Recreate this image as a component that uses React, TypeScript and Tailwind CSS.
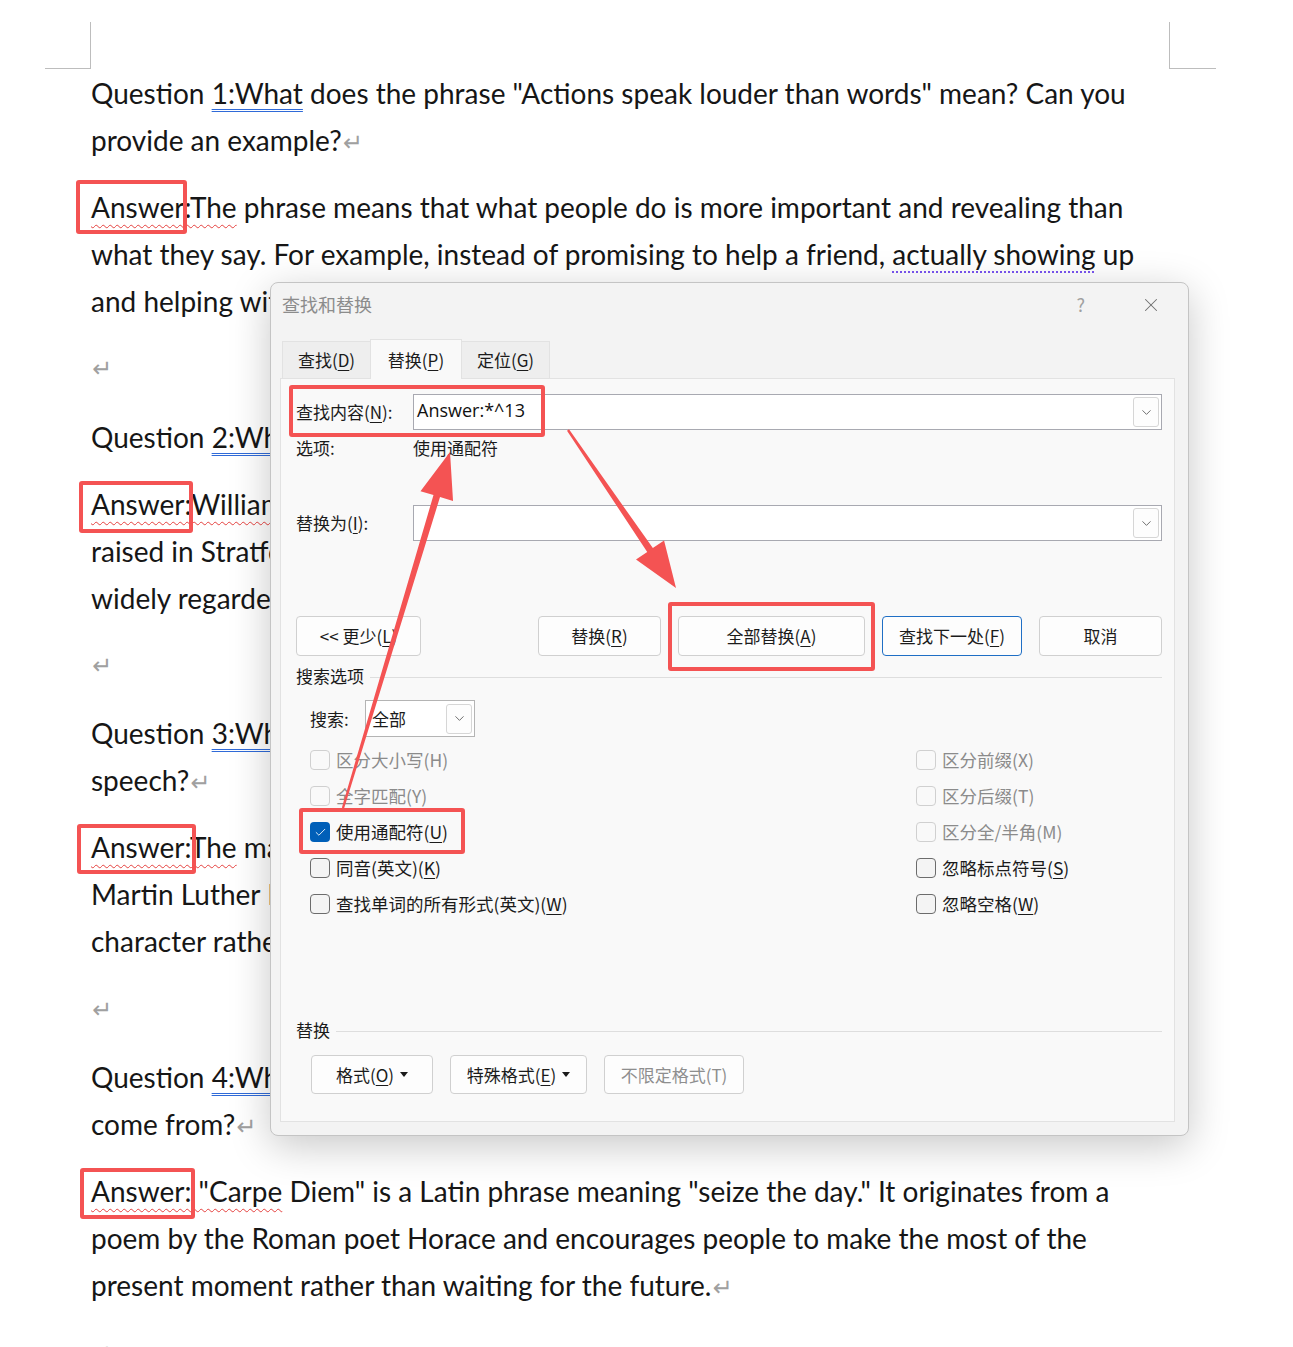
import React from 'react';
import { X, ChevronDown, Check } from 'lucide-react';

const RED = 'border-[#f45353]';

const Line = ({ children }: { children?: React.ReactNode }) => (
  <div className="h-[47px] leading-[47px] whitespace-nowrap">{children}</div>
);

const Ret = () => <span className="text-[#a0a0a0] text-[24px] font-['DejaVu_Sans',sans-serif] ml-[1px]">↵</span>;

const Dbl = ({ children }: { children: React.ReactNode }) => (
  <span className="underline decoration-double decoration-[#2f6ad8] decoration-1 underline-offset-[5px]">{children}</span>
);

const Wavy = ({ children }: { children: React.ReactNode }) => (
  <span className="underline decoration-wavy decoration-[#e5413f] decoration-1 underline-offset-[6px]">{children}</span>
);

const Dots = ({ children }: { children: React.ReactNode }) => (
  <span className="underline decoration-dotted decoration-[#7a55f0] decoration-2 underline-offset-[6px]">{children}</span>
);

const Mn = ({ children }: { children: React.ReactNode }) => (
  <span className="underline underline-offset-[3px] decoration-1">{children}</span>
);

const Caret = () => (
  <svg width="8" height="5" viewBox="0 0 8 5" className="ml-[6px]">
    <polygon points="0,0 8,0 4,5" fill="#1b1b1b" />
  </svg>
);

const DropBtn = () => (
  <div className="w-[26px] h-[30px] mr-[2px] border border-[#d6d6d6] rounded-[3px] bg-[#fdfdfd] flex items-center justify-center">
    <ChevronDown size={15} strokeWidth={1.4} color="#5a5a5a" />
  </div>
);

const Btn = ({ w, blue, disabled, children }: { w: string; blue?: boolean; disabled?: boolean; children: React.ReactNode }) => (
  <div
    className={`${w} h-full flex items-center justify-center rounded-[4px] bg-[#fdfdfd] border ${
      blue ? 'border-[#1f6fc5]' : 'border-[#d0d0d0]'
    } ${disabled ? 'text-[#8e8e8e]' : ''}`}
  >
    {children}
  </div>
);

const Box = ({ state, children }: { state: 'off' | 'on' | 'dis'; children: React.ReactNode }) => (
  <div className="h-[36px] flex items-center">
    {state === 'on' ? (
      <div className="w-[20px] h-[20px] rounded-[4px] bg-[#005fb8] flex items-center justify-center">
        <Check size={13} strokeWidth={1.6} color="#fff" />
      </div>
    ) : (
      <div
        className={`w-[20px] h-[20px] rounded-[4px] border ${
          state === 'dis' ? 'border-[#d0d0d0]' : 'border-[#6c6c6c] bg-[#f4f4f4]'
        }`}
      />
    )}
    <span className={`ml-[6px] ${state === 'dis' ? 'text-[#8b8b8b]' : ''}`}>{children}</span>
  </div>
);

function Arrow({ x1, y1, x2, y2 }: { x1: number; y1: number; x2: number; y2: number }) {
  const dx = x2 - x1;
  const dy = y2 - y1;
  const len = Math.hypot(dx, dy);
  const ux = dx / len;
  const uy = dy / len;
  const px = -uy;
  const py = ux;
  const head = 46;
  const hw = 17;
  const bx = x2 - ux * head;
  const by = y2 - uy * head;
  const pts = [
    [x1 + px * 1.2, y1 + py * 1.2],
    [bx + px * 3.4, by + py * 3.4],
    [bx + px * hw, by + py * hw],
    [x2, y2],
    [bx - px * hw, by - py * hw],
    [bx - px * 3.4, by - py * 3.4],
    [x1 - px * 1.2, y1 - py * 1.2],
  ]
    .map((p) => p.join(','))
    .join(' ');
  return <polygon points={pts} fill="#f45353" />;
}

export default function App() {
  return (
    <div className="relative w-[1293px] h-[1347px] overflow-hidden bg-white">
      {/* page corner marks */}
      <div className="flex justify-between h-[69px]">
        <div className="ml-[45px] mt-[22px] w-[46px] h-[47px] border-r border-b border-[#bdbdbd]" />
        <div className="mr-[77px] mt-[22px] w-[47px] h-[47px] border-l border-b border-[#bdbdbd]" />
      </div>

      {/* document body */}
      <div className="pl-[91px] mt-[1px] text-[28px] text-[#161616] font-[Lato,sans-serif]">
        <div>
          <Line>Question <Dbl>1:What</Dbl> does the phrase "Actions speak louder than words" mean? Can you</Line>
          <Line>provide an example?<Ret /></Line>
        </div>
        <div className="mt-[20px]">
          <Line><Wavy>Answer:The</Wavy> phrase means that what people do is more important and revealing than</Line>
          <Line>what they say. For example, instead of promising to help a friend, <Dots>actually showing</Dots> up</Line>
          <Line>and helping with the task demonstrates true commitment.<Ret /></Line>
        </div>
        <div className="mt-[18px]"><Line><Ret /></Line></div>
        <div className="mt-[24px]">
          <Line>Question <Dbl>2:Who</Dbl> wrote the famous play "Romeo and Juliet"?<Ret /></Line>
        </div>
        <div className="mt-[20px]">
          <Line><Wavy>Answer:William</Wavy> Shakespeare wrote "Romeo and Juliet." He was a playwright born and</Line>
          <Line>raised in Stratford-upon-Avon, and his works are among the most famous.</Line>
          <Line>widely regarded as the greatest writer in the English language.<Ret /></Line>
        </div>
        <div className="mt-[18px]"><Line><Ret /></Line></div>
        <div className="mt-[23px]">
          <Line>Question <Dbl>3:What</Dbl> is the main message of Martin Luther King Jr.'s "I Have a Dream"</Line>
          <Line>speech?<Ret /></Line>
        </div>
        <div className="mt-[20px]">
          <Line><Wavy>Answer:The</Wavy> main message is a call for an end to racism and for equality.</Line>
          <Line>Martin Luther King Jr. dreamed of a nation where people would be judged by</Line>
          <Line>character rather than the color of their skin.<Ret /></Line>
        </div>
        <div className="mt-[19px]"><Line><Ret /></Line></div>
        <div className="mt-[23px]">
          <Line>Question <Dbl>4:What</Dbl> does the phrase "Carpe Diem" mean and where does it</Line>
          <Line>come from?<Ret /></Line>
        </div>
        <div className="mt-[20px]">
          <Line><Wavy>Answer: "Carpe</Wavy> Diem" is a Latin phrase meaning "seize the day." It originates from a</Line>
          <Line>poem by the Roman poet Horace and encourages people to make the most of the</Line>
          <Line>present moment rather than waiting for the future.<Ret /></Line>
        </div>
        <div className="mt-[19px]"><Line><Ret /></Line></div>
      </div>

      {/* find & replace dialog */}
      <div className="absolute left-[270px] top-[282px] w-[919px] h-[854px] rounded-[8px] border border-[#c4c4c4] bg-[#f3f3f3] shadow-[0_10px_40px_rgba(0,0,0,0.22)] flex flex-col text-[17px] text-[#1b1b1b] font-['Noto_Sans_CJK_SC',sans-serif]">
        <div className="h-[43px] flex items-center pl-[11px] pr-[26px]">
          <span className="text-[18px] text-[#8c8c8c]">查找和替换</span>
          <span className="ml-auto text-[18px] text-[#a0a0a0]">?</span>
          <X className="ml-[55px]" size={22} strokeWidth={1.1} color="#6e6e6e" />
        </div>

        <div className="mt-[12px] flex items-end h-[40px] pl-[11px] relative z-10">
          <div className="w-[88px] h-[37px] flex items-center justify-center bg-[#eeeeee] border-t border-l border-[#e2e2e2]">
            查找(<Mn>D</Mn>)
          </div>
          <div className="w-[92px] h-[40px] -mb-px flex items-center justify-center bg-[#f9f9f9] border-t border-l border-r border-[#e2e2e2]">
            替换(<Mn>P</Mn>)
          </div>
          <div className="w-[88px] h-[37px] flex items-center justify-center bg-[#eeeeee] border-t border-r border-[#e2e2e2]">
            定位(<Mn>G</Mn>)
          </div>
        </div>

        <div className="ml-[9px] mr-[13px] h-[744px] bg-[#f9f9f9] border border-[#e2e2e2] pl-[15px] pr-[12px] flex flex-col">
          <div className="mt-[15px] h-[36px] flex items-center">
            <span className="w-[117px]">查找内容(<Mn>N</Mn>):</span>
            <div className="flex-1 h-full bg-white border border-[#a8a9b1] flex items-center">
              <span className="flex-1 pl-[3px] pb-[4px] text-[18px] text-[#111] font-['Open_Sans',sans-serif]">Answer:*^13</span>
              <DropBtn />
            </div>
          </div>
          <div className="mt-[6px] h-[24px] flex items-center">
            <span className="w-[117px]">选项:</span>
            <span>使用通配符</span>
          </div>
          <div className="mt-[45px] h-[36px] flex items-center">
            <span className="w-[117px]">替换为(<Mn>I</Mn>):</span>
            <div className="flex-1 h-full bg-white border border-[#a8a9b1] flex items-center justify-end">
              <DropBtn />
            </div>
          </div>

          <div className="mt-[75px] h-[40px] flex justify-between">
            <Btn w="w-[125px]">&lt;&lt; 更少(<Mn>L</Mn>)</Btn>
            <div className="flex gap-[17px] h-full">
              <Btn w="w-[123px]">替换(<Mn>R</Mn>)</Btn>
              <Btn w="w-[187px]">全部替换(<Mn>A</Mn>)</Btn>
              <Btn w="w-[140px]" blue>查找下一处(<Mn>F</Mn>)</Btn>
              <Btn w="w-[123px]">取消</Btn>
            </div>
          </div>

          <div className="mt-[10px] h-[20px] flex items-center">
            <span>搜索选项</span>
            <div className="flex-1 h-px bg-[#dedede] ml-[6px] mt-[2px]" />
          </div>

          <div className="mt-[14px] h-[37px] flex items-center pl-[14px]">
            <span className="w-[55px]">搜索:</span>
            <div className="w-[110px] h-full bg-white border border-[#b4b4b4] flex items-center justify-between">
              <span className="pl-[6px]">全部</span>
              <DropBtn />
            </div>
          </div>

          <div className="mt-[5px] flex text-[17.5px]">
            <div className="w-[620px] pl-[14px] flex flex-col">
              <Box state="dis">区分大小写(H)</Box>
              <Box state="dis">全字匹配(Y)</Box>
              <Box state="on">使用通配符(<Mn>U</Mn>)</Box>
              <Box state="off">同音(英文)(<Mn>K</Mn>)</Box>
              <Box state="off">查找单词的所有形式(英文)(<Mn>W</Mn>)</Box>
            </div>
            <div className="flex flex-col">
              <Box state="dis">区分前缀(X)</Box>
              <Box state="dis">区分后缀(T)</Box>
              <Box state="dis">区分全/半角(M)</Box>
              <Box state="off">忽略标点符号(<Mn>S</Mn>)</Box>
              <Box state="off">忽略空格(<Mn>W</Mn>)</Box>
            </div>
          </div>

          <div className="mt-[98px] h-[20px] flex items-center">
            <span>替换</span>
            <div className="flex-1 h-px bg-[#dedede] ml-[6px] mt-[2px]" />
          </div>

          <div className="mt-[15px] h-[39px] flex pl-[15px] gap-[17px]">
            <Btn w="w-[122px]">格式(<Mn>O</Mn>)<Caret /></Btn>
            <Btn w="w-[137px]">特殊格式(<Mn>E</Mn>)<Caret /></Btn>
            <Btn w="w-[140px]" disabled>不限定格式(T)</Btn>
          </div>
        </div>
      </div>

      {/* red annotation boxes */}
      <div className={`absolute left-[76px] top-[180px] w-[111px] h-[54px] border-4 ${RED} rounded-[3px]`} />
      <div className={`absolute left-[79px] top-[481px] w-[114px] h-[52px] border-4 ${RED} rounded-[3px]`} />
      <div className={`absolute left-[77px] top-[824px] w-[119px] h-[50px] border-4 ${RED} rounded-[3px]`} />
      <div className={`absolute left-[80px] top-[1168px] w-[115px] h-[51px] border-4 ${RED} rounded-[3px]`} />
      <div className={`absolute left-[289px] top-[385px] w-[256px] h-[52px] border-4 ${RED} rounded-[3px]`} />
      <div className={`absolute left-[668px] top-[602px] w-[207px] h-[69px] border-4 ${RED} rounded-[3px]`} />
      <div className={`absolute left-[299px] top-[808px] w-[166px] h-[46px] border-4 ${RED} rounded-[3px]`} />

      <svg className="absolute inset-0 pointer-events-none" width="1293" height="1347">
        <Arrow x1={343} y1={808} x2={450} y2={452} />
        <Arrow x1={568} y1={430} x2={676} y2={588} />
      </svg>
    </div>
  );
}
